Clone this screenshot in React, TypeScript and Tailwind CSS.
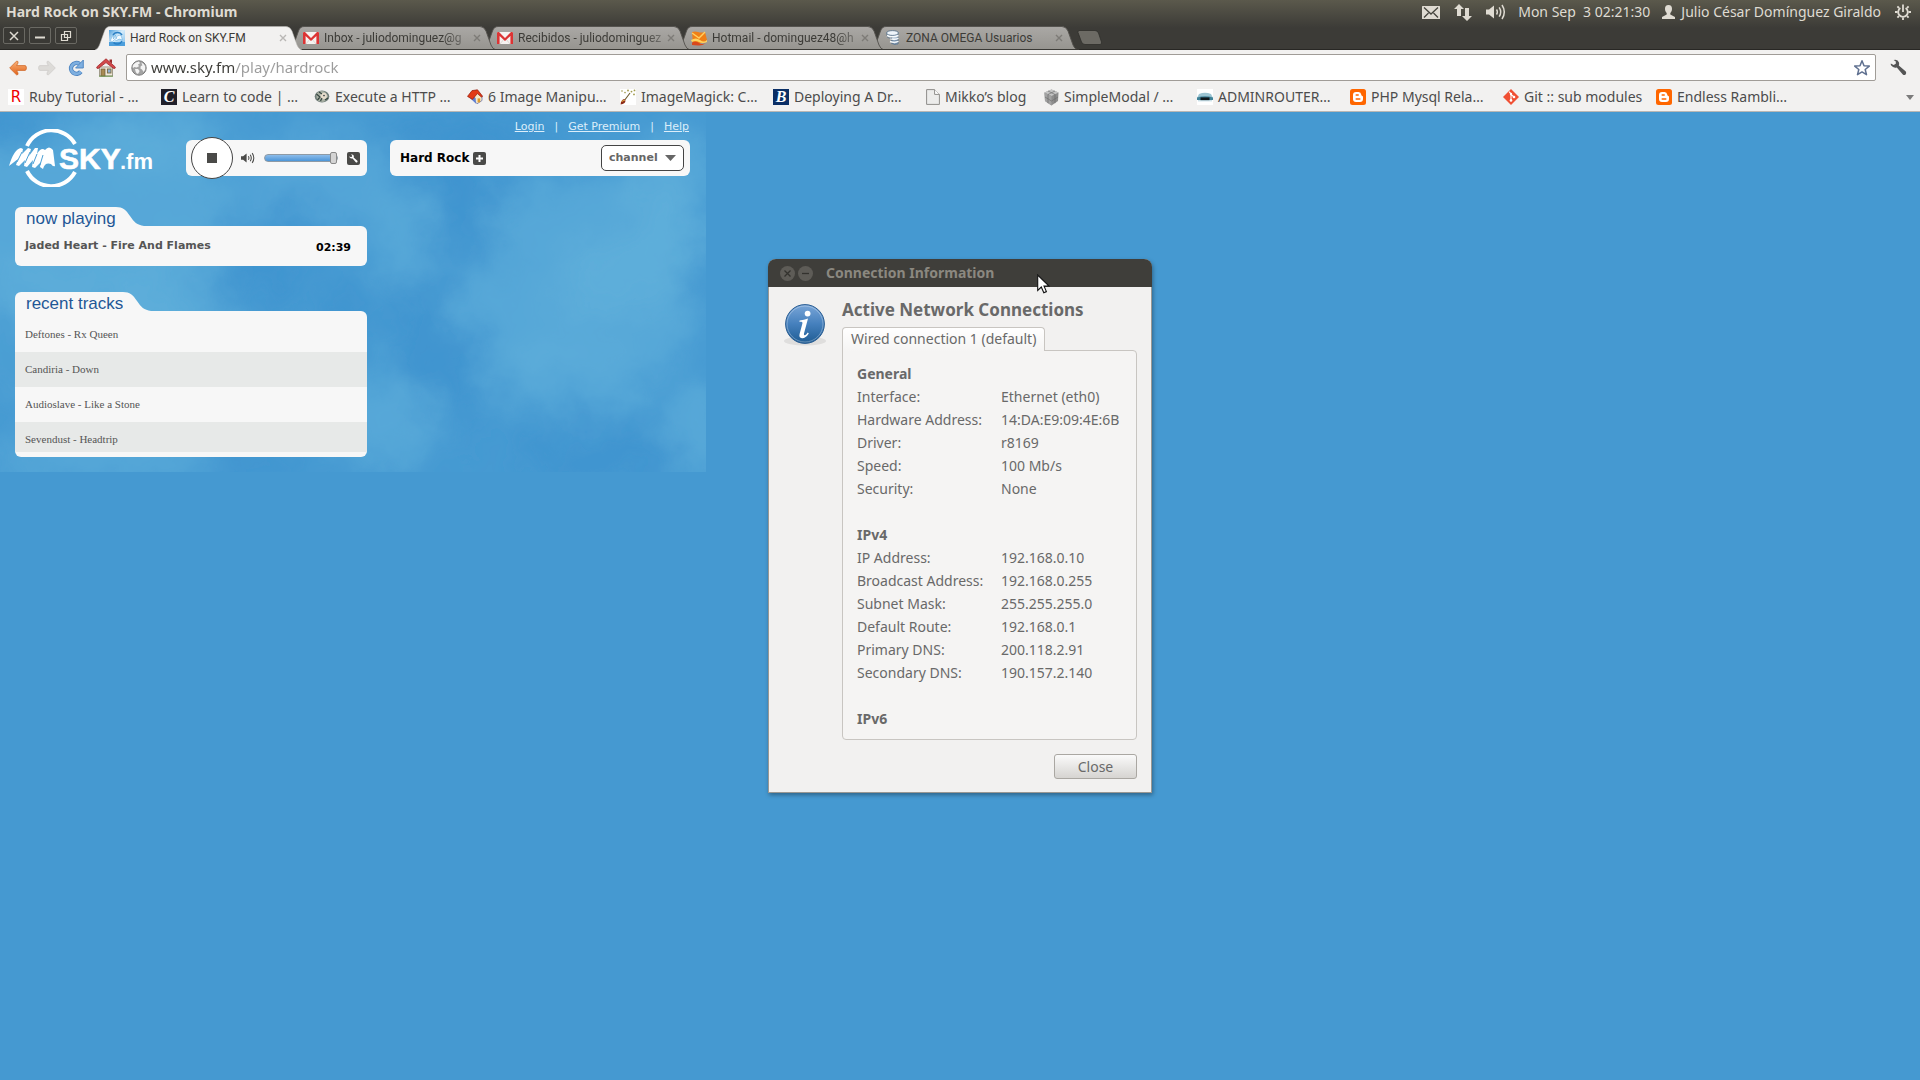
import React from 'react';

type IconProps = { className?: string };

const UI = 'font-["Noto_Sans",sans-serif]';

/* ---------- top panel icons ---------- */

const MailIcon = () => (
  <svg viewBox="0 0 18 13" className="h-[13px] w-[18px]" aria-hidden="true">
    <rect width="18" height="13" rx="0.5" fill="#dfdbd2" />
    <path d="M2 1.5 L9 8 L16 1.5 M2 11.5 L6.5 7 M16 11.5 L11.5 7" fill="none" stroke="#45443d" strokeWidth="1.3" />
  </svg>
);

const NetworkIcon = () => (
  <svg viewBox="0 0 18 17" className="h-[17px] w-[18px]" aria-hidden="true">
    <path d="M5 0 L10 5 H7 V12 H3 V5 H0 Z M13 17 L8 12 H11 V4 H15 V12 H18 Z" fill="#dfdbd2" />
  </svg>
);

const VolumeIcon = ({ className, color }: IconProps & { color: string }) => (
  <svg viewBox="0 0 20 16" className={className} aria-hidden="true">
    <path d="M0 5.5 H3 L8 1.5 V14.5 L3 10.5 H0 Z" fill={color} />
    <path d="M10.5 5.5 Q12.2 8 10.5 10.5 M13.2 3.3 Q16.2 8 13.2 12.7 M16 1 Q20.6 8 16 15" fill="none" stroke={color} strokeWidth="1.5" />
  </svg>
);

const UserIcon = () => (
  <svg viewBox="0 0 13 14" className="h-[14px] w-[13px]" aria-hidden="true">
    <path d="M6.5 0 C9 0 10 1.6 10 3.8 C10 5.8 9.2 7.2 8.3 8 V9.6 L13 12 V14 H0 V12 L4.7 9.6 V8 C3.8 7.2 3 5.8 3 3.8 C3 1.6 4 0 6.5 0 Z" fill="#dfdbd2" />
  </svg>
);

const PowerIcon = () => (
  <svg viewBox="0 0 16 16" className="size-4" aria-hidden="true">
    <g stroke="#dfdbd2" fill="none">
      <path d="M5.4 4 A4.8 4.8 0 1 0 10.6 4" strokeWidth="1.8" />
      <path d="M8 0.5 V8" strokeWidth="1.8" />
      <path d="M0 8 H2.6 M13.4 8 H16 M8 13.4 V16 M2.4 2.4 L4 4 M13.6 2.4 L12 4 M2.4 13.6 L4 12 M13.6 13.6 L12 12" strokeWidth="1.8" />
    </g>
  </svg>
);

/* ---------- tab favicons ---------- */

const SkyFavicon = () => (
  <svg viewBox="0 0 16 16" className="size-4 shrink-0" aria-hidden="true">
    <defs>
      <linearGradient id="skyfav" x1="0" y1="0" x2="1" y2="1">
        <stop offset="0" stopColor="#4d9fdc" />
        <stop offset="0.45" stopColor="#d6ecfa" />
        <stop offset="1" stopColor="#7fbdea" />
      </linearGradient>
    </defs>
    <rect width="16" height="16" fill="url(#skyfav)" />
    <rect y="12" width="16" height="4" fill="#4d9fdc" />
    <path d="M4 5 A5.2 5.2 0 0 1 13 5 M4.5 12.5 A5.2 5.2 0 0 0 13 11" fill="none" stroke="#2a7fc4" strokeWidth="1.5" />
    <path d="M1 11 L4 5 L4.5 9 L6.5 5 L7 9 Q8 4 12 5.5 L13.5 10 Q10 8 7.5 10.5 L5.5 9.5 L3.5 11.5 Z" fill="#f4fbff" stroke="#5ba6dc" strokeWidth="0.5" />
  </svg>
);

const GmailIcon = () => (
  <svg viewBox="0 0 16 12" className="h-3 w-4 shrink-0" aria-hidden="true">
    <rect width="16" height="12" rx="1" fill="#f6f3f1" />
    <path d="M3 12 L7 7 M13 12 L9 7" stroke="#d8cfcb" strokeWidth="0.8" />
    <path d="M0 1 Q0 0 1 0 H2 L8 6 L14 0 H15 Q16 0 16 1 V12 H13.4 V4 L8 9 L2.6 4 V12 H0 Z" fill="#dc3434" />
  </svg>
);

const HotmailIcon = () => (
  <svg viewBox="0 0 16 15" className="h-[15px] w-4 shrink-0" aria-hidden="true">
    <path d="M1 1 Q4 0 7 1 T14 1 L16 9 Q12 13 8 12 L2 13 Z" fill="#f07f17" />
    <path d="M1 2 L8 7 L14 1" fill="none" stroke="#ffd062" strokeWidth="1.4" />
    <path d="M0 9 Q5 6 9 9 T16 9 L16 11 Q12 13 8 11 T1 11 Z" fill="#ffd45e" />
    <path d="M1 11.5 Q5 10 8 12 T15 12 Q11 15 7 14.5 T1 14 Z" fill="#d9481c" />
  </svg>
);

const OmegaIcon = () => (
  <svg viewBox="0 0 16 16" className="size-4 shrink-0" aria-hidden="true">
    <path d="M2 3 V6 H7 V13 Q9 15.5 13 14 V4 Z" fill="#a9bdd2" stroke="#4e6780" strokeWidth="0.7" />
    <ellipse cx="7.5" cy="3" rx="6" ry="2.4" fill="#eef4fa" stroke="#4e6780" strokeWidth="0.8" />
    <path d="M2 5.5 Q7 8 13.5 5.5 M5 8.5 Q9 10 13.5 8.3 M5 11.5 Q9 13 13.5 11.3" stroke="#f7fafc" strokeWidth="1.4" fill="none" />
    <path d="M2 7 Q4 8.6 7 8.3 M6 10.5 Q9 11.6 13.5 10 M6 13.5 Q9 15 13.5 12.8" stroke="#5b7590" strokeWidth="0.7" fill="none" />
  </svg>
);

/* ---------- toolbar icons ---------- */

const BackIcon = () => (
  <svg viewBox="0 0 18 16" className="h-4 w-[18px]" aria-hidden="true">
    <defs>
      <linearGradient id="back" x1="0" y1="0" x2="0" y2="1">
        <stop offset="0" stopColor="#f9b27a" />
        <stop offset="1" stopColor="#e2641b" />
      </linearGradient>
    </defs>
    <path d="M0.7 8 L7.5 1.2 Q9.5 0.8 9 3 L7.6 5.6 H16 Q17.4 5.6 17.4 8 Q17.4 10.4 16 10.4 H7.6 L9 13 Q9.5 15.2 7.5 14.8 Z" fill="url(#back)" stroke="#cf6a2c" strokeWidth="0.8" />
  </svg>
);

const ForwardIcon = () => (
  <svg viewBox="0 0 18 16" className="h-4 w-[18px]" aria-hidden="true">
    <path d="M17.3 8 L10.5 1.2 Q8.5 0.8 9 3 L10.4 5.6 H2 Q0.6 5.6 0.6 8 Q0.6 10.4 2 10.4 H10.4 L9 13 Q8.5 15.2 10.5 14.8 Z" fill="#dddbd8" stroke="#cfcdca" strokeWidth="0.8" />
  </svg>
);

const ReloadIcon = () => (
  <svg viewBox="0 0 18 18" className="size-[18px]" aria-hidden="true">
    <path d="M12.6 5 A5.4 5.4 0 1 0 13.8 12.6" fill="none" stroke="#4b82bf" strokeWidth="4.4" />
    <path d="M12.6 5 A5.4 5.4 0 1 0 13.8 12.6" fill="none" stroke="#7eafe0" strokeWidth="2.8" />
    <path d="M16.3 1 V9 H8.6 Z" fill="#7eafe0" stroke="#4b82bf" strokeWidth="0.9" />
  </svg>
);

const HomeIcon = () => (
  <svg viewBox="0 0 20 19" className="h-[19px] w-5" aria-hidden="true">
    <path d="M3.5 9 H16.5 V18 H3.5 Z" fill="#f0e9dc" stroke="#8d8573" strokeWidth="0.8" />
    <rect x="5" y="11" width="4" height="7" fill="#a88a52" stroke="#6c5a38" strokeWidth="0.7" />
    <rect x="11.4" y="11" width="3.6" height="4" fill="#8faed0" stroke="#7a6a3e" strokeWidth="0.9" />
    <path d="M13.5 1.5 H16 V5.5 L13.5 3.5 Z" fill="#9c2b2b" />
    <path d="M10 0.8 L19.3 9 Q19.4 11 17.6 10.4 L10 4.6 L2.4 10.4 Q0.6 11 0.7 9 Z" fill="#d3484a" stroke="#9f2a2c" strokeWidth="0.8" />
    <path d="M3 18.2 H17" stroke="#6f9850" strokeWidth="1" />
  </svg>
);

const GlobeIcon = () => (
  <svg viewBox="0 0 16 16" className="size-4 shrink-0" aria-hidden="true">
    <circle cx="8" cy="8" r="7.2" fill="#a3a3a3" stroke="#7b7b7b" strokeWidth="1" />
    <path d="M2.4 4.6 Q4.4 1.9 8 1.6 L9 3.2 L7 4.6 L8 6.2 L5.6 7.6 L3.4 7 L2 8 L1.6 7 Z" fill="#f4f4f4" />
    <path d="M4 9 L7 9 L8.6 11 L7 14 Q5 13.6 4.6 11.6 Z" fill="#f4f4f4" />
    <path d="M10.4 2.6 Q13 3.6 14.2 6.2 L14.2 9.6 L12.6 12 L11 9.4 L9.4 8.4 L9.8 6 L11.4 5.4 Z" fill="#f4f4f4" />
  </svg>
);

const StarIcon = () => (
  <svg viewBox="0 0 18 18" className="size-[18px]" aria-hidden="true">
    <path d="M9 1.8 L11 6.7 L16.3 7.1 L12.2 10.5 L13.5 15.7 L9 12.9 L4.5 15.7 L5.8 10.5 L1.7 7.1 L7 6.7 Z" fill="#fff" stroke="#5f7090" strokeWidth="1.5" strokeLinejoin="round" />
  </svg>
);

const WrenchIcon = ({ className, color }: IconProps & { color: string }) => (
  <svg viewBox="0 0 17 17" className={className} aria-hidden="true">
    <path d="M3.6 1 Q7.8 0 9 3.4 Q9.4 5 8.8 6.4 L15.8 12.6 Q16.8 14 15.6 15.4 Q14.2 16.4 12.8 15.4 L6.8 8.4 Q3.4 9.4 1.2 6.6 Q0.6 5.6 0.8 4.4 L3.6 6 L5.8 4.8 L5.8 2.6 Z" fill={color} />
  </svg>
);

/* ---------- bookmark icons ---------- */

const RIcon = () => (
  <span className='flex size-4 shrink-0 items-center justify-center bg-white font-["DejaVu_Sans",sans-serif] text-[15px] leading-4 text-[#f00000]' aria-hidden="true">R</span>
);
const CIcon = () => (
  <span className='flex size-4 shrink-0 items-center justify-center bg-[#20202a] font-["Liberation_Serif",serif] text-base leading-4 font-bold text-white italic' aria-hidden="true">C</span>
);
const BIcon = () => (
  <span className='flex size-4 shrink-0 items-center justify-center bg-[#0b2f66] font-["Liberation_Serif",serif] text-base leading-4 font-bold text-white italic' aria-hidden="true">B</span>
);
const PerlIcon = () => (
  <svg viewBox="0 0 16 16" className="size-4 shrink-0" aria-hidden="true">
    <ellipse cx="8" cy="7.5" rx="7.3" ry="6" fill="#6f7c78" />
    <path d="M3 4 Q7 0.5 11 3 L14 7 Q13 12 9 13 L4 12 Q1.5 8 3 4 Z" fill="#a9b0a4" />
    <circle cx="9.6" cy="7" r="3.2" fill="#e6dccb" />
    <path d="M2.5 5 L6 8 L3.5 11 M5 3 L8 5 M11 11 L14 9 M6.5 12 L8 9" stroke="#35443f" strokeWidth="1.2" fill="none" />
    <circle cx="10" cy="6.6" r="0.8" fill="#263238" />
  </svg>
);
const HouseIcon = () => (
  <svg viewBox="0 0 16 16" className="size-4 shrink-0" aria-hidden="true">
    <path d="M4 8 L10 14.8 L15 11.5 V7 L10 3 Z" fill="#f6e8c8" stroke="#5a67a8" strokeWidth="0.7" />
    <path d="M3 9 L9 14.8 L8.6 9 L5 6 Z" fill="#5f7fd0" />
    <rect x="10.6" y="9.4" width="2.6" height="4" fill="#e09a2c" />
    <path d="M0.5 7.4 L5 1.6 L10.5 0.8 L15.6 7.2 L14.6 8.2 L10.4 4.6 L5.4 10.4 Z" fill="#e23a17" stroke="#8e1a0b" strokeWidth="0.7" />
  </svg>
);
const WandIcon = () => (
  <svg viewBox="0 0 16 16" className="size-4 shrink-0 bg-white" aria-hidden="true">
    <path d="M4 12 L10 4" stroke="#6d5a2c" strokeWidth="1.1" />
    <path d="M0.5 15.5 Q1 10.5 4.5 10 Q6.4 12 4.5 14 Q3 15 0.5 15.5 Z" fill="#8c2a17" />
    <path d="M1.5 12.5 L5 11" stroke="#e7b04a" strokeWidth="1" />
    <g fill="#a09a4a">
      <circle cx="8" cy="1.5" r="0.9" /><circle cx="11.5" cy="2.6" r="0.9" /><circle cx="14.5" cy="1.4" r="0.9" />
      <circle cx="14" cy="5.4" r="0.9" /><circle cx="5" cy="3.6" r="0.8" /><circle cx="2" cy="2" r="0.8" />
    </g>
  </svg>
);
const PageIcon = () => (
  <svg viewBox="0 0 14 16" className="h-4 w-3.5 shrink-0" aria-hidden="true">
    <path d="M0.6 0.6 H8.6 L13.4 5.4 V15.4 H0.6 Z" fill="#ececeb" stroke="#8f8d8a" strokeWidth="1" />
    <path d="M8.6 0.6 V5.4 H13.4" fill="#fff" stroke="#8f8d8a" strokeWidth="1" />
  </svg>
);
const CubeIcon = () => (
  <svg viewBox="0 0 15 17" className="h-[17px] w-[15px] shrink-0" aria-hidden="true">
    <path d="M7.5 0.5 L14.5 3.5 L14 12 L7.5 16.5 L1 12 L0.5 3.5 Z" fill="#8d8d8d" />
    <path d="M7.5 0.5 L14.5 3.5 L7.5 7 L0.5 3.5 Z" fill="#c4c4c4" />
    <path d="M7.5 7 V16.5 L1 12 L0.5 3.5 Z" fill="#a2a2a2" />
    <path d="M4 5.5 V14.2 M11 5.5 V14.2 M4 2 L11 5.5 M11 2 L4 5.5 M1 8 L7.5 12 L14 8" stroke="#6e6e6e" strokeWidth="0.7" fill="none" />
  </svg>
);
const RouterIcon = () => (
  <svg viewBox="0 0 16 16" className="size-4 shrink-0 bg-white" aria-hidden="true">
    <path d="M2 5 Q8 2.6 14 5 L16 9 Q8 6.8 0 9 Z" fill="#9cc4d2" />
    <path d="M0 8.5 Q8 6 16 8.5 V11 H0 Z" fill="#3f8298" />
    <rect x="3.5" y="8.4" width="9" height="3" fill="#10171b" />
    <path d="M1 11.8 H15" stroke="#b5d4df" strokeWidth="1" />
  </svg>
);
const BloggerIcon = () => (
  <svg viewBox="0 0 16 16" className="size-4 shrink-0" aria-hidden="true">
    <rect width="16" height="16" rx="2.5" fill="#ff6600" />
    <path d="M6 3 H8.6 Q11 3 11.2 5.6 Q11.4 6.9 12.3 7 Q13 7.1 13 8 V10 Q13 13 10 13 H6 Q3 13 3 10 V6 Q3 3 6 3 Z" fill="#fff" />
    <path d="M6.2 6 H8.2 M6.2 10 H9.8" stroke="#ff6600" strokeWidth="1.5" strokeLinecap="round" />
  </svg>
);
const GitIcon = () => (
  <svg viewBox="0 0 16 16" className="size-4 shrink-0" aria-hidden="true">
    <path d="M8 0 L16 8 L8 16 L0 8 Z" fill="#f04f33" />
    <path d="M6 2.6 L8 4.8 V11.4 M8 5.4 L11 8" fill="none" stroke="#fff" strokeWidth="1.1" />
    <circle cx="8" cy="11.4" r="1.3" fill="#fff" /><circle cx="11" cy="8" r="1.3" fill="#fff" /><circle cx="8" cy="5" r="1.2" fill="#fff" />
  </svg>
);

/* ---------- browser chrome ---------- */

type TabInfo = { title: string; icon: React.ReactNode; active?: boolean; fade?: boolean; layer: string };

const tabs: TabInfo[] = [
  { title: 'Hard Rock on SKY.FM', icon: <SkyFavicon />, active: true, layer: 'z-50' },
  { title: 'Inbox - juliodominguez@g', icon: <GmailIcon />, fade: true, layer: 'z-40' },
  { title: 'Recibidos - juliodominguez', icon: <GmailIcon />, fade: true, layer: 'z-30' },
  { title: 'Hotmail - dominguez48@h', icon: <HotmailIcon />, fade: true, layer: 'z-20' },
  { title: 'ZONA OMEGA Usuarios', icon: <OmegaIcon />, layer: 'z-10' },
];

const TabShape = ({ active }: { active?: boolean }) => (
  <svg viewBox="0 0 208 24" preserveAspectRatio="none" className="absolute inset-0 h-full w-full" aria-hidden="true">
    <defs>
      <linearGradient id="tabIdle" x1="0" y1="0" x2="0" y2="1">
        <stop offset="0" stopColor="#aaa8a5" />
        <stop offset="1" stopColor="#96948f" />
      </linearGradient>
    </defs>
    <path
      d="M0 24 Q3 23 4.5 19 L9.5 5 Q11 0.5 15 0.5 H191 Q195 0.5 197 5 L202 19 Q203.5 23 207 24 Z"
      fill={active ? '#f2f1f0' : 'url(#tabIdle)'}
    />
    <path
      d="M0 24 Q3 23 4.5 19 L9.5 5 Q11 0.5 15 0.5 H191 Q195 0.5 197 5 L202 19 Q203.5 23 207 24"
      fill="none"
      stroke={active ? '#b9b7b3' : '#53514c'}
      strokeWidth="1"
      strokeOpacity={active ? 0.5 : 0.9}
    />
    {!active && <path d="M0 23.5 H208" stroke="#3a3935" />}
  </svg>
);

const Tab = ({ title, icon, active, fade, layer }: TabInfo) => (
  <div className={`relative -mr-3.5 flex h-6 w-52 items-center pr-3 pl-3.5 ${layer}`}>
    <TabShape active={active} />
    <button type="button" className="relative flex min-w-0 flex-1 items-center gap-[5px] text-left">
      {icon}
      <span className={`font-["Roboto",sans-serif] text-xs leading-5 whitespace-nowrap text-[#3c3b37] ${fade ? 'mask-r-from-88% mask-r-to-110%' : ''}`}>{title}</span>
    </button>
    <button type="button" aria-label={`Close ${title}`} className="relative p-1">
      <svg viewBox="0 0 8 8" className="size-2" aria-hidden="true">
        <path d="M1 1 L7 7 M7 1 L1 7" stroke={active ? '#b9b7b5' : '#7d7b77'} strokeWidth="1.4" />
      </svg>
    </button>
  </div>
);

const WindowButton = ({ label, children }: { label: string; children: React.ReactNode }) => (
  <button type="button" aria-label={label} className="flex h-[17px] w-[22px] items-center justify-center rounded-xs border border-[#6a6963] bg-[#3a3935]">
    <svg viewBox="0 0 12 12" className="size-3" fill="none" stroke="#dfdbd2" aria-hidden="true">{children}</svg>
  </button>
);

const bookmarks: { label: string; icon: React.ReactNode; width: string }[] = [
  { label: 'Ruby Tutorial - …', icon: <RIcon />, width: 'w-[153px]' },
  { label: 'Learn to code | …', icon: <CIcon />, width: 'w-[153px]' },
  { label: 'Execute a HTTP …', icon: <PerlIcon />, width: 'w-[153px]' },
  { label: '6 Image Manipu…', icon: <HouseIcon />, width: 'w-[153px]' },
  { label: 'ImageMagick: C…', icon: <WandIcon />, width: 'w-[153px]' },
  { label: 'Deploying A Dr…', icon: <BIcon />, width: 'w-[153px]' },
  { label: 'Mikko’s blog', icon: <PageIcon />, width: 'w-[118px]' },
  { label: 'SimpleModal / …', icon: <CubeIcon />, width: 'w-[153px]' },
  { label: 'ADMINROUTER…', icon: <RouterIcon />, width: 'w-[153px]' },
  { label: 'PHP Mysql Rela…', icon: <BloggerIcon />, width: 'w-[153px]' },
  { label: 'Git :: sub modules', icon: <GitIcon />, width: 'w-[153px]' },
  { label: 'Endless Rambli…', icon: <BloggerIcon />, width: 'w-[153px]' },
];

const TopPanel = () => (
  <div className="flex h-6 items-center justify-between pr-[9px] pl-1.5 text-[#dfdbd2]">
    <h1 className="text-sm leading-6 font-bold">Hard Rock on SKY.FM - Chromium</h1>
    <div className="flex items-center text-sm leading-6">
      <button type="button" aria-label="Messages" className="mr-3.5"><MailIcon /></button>
      <button type="button" aria-label="Network" className="mr-3.5"><NetworkIcon /></button>
      <button type="button" aria-label="Sound" className="mr-3"><VolumeIcon className="h-4 w-5" color="#dfdbd2" /></button>
      <button type="button" className="mr-3 whitespace-pre">Mon Sep  3 02:21:30</button>
      <button type="button" className="mr-3.5 flex items-center gap-1.5"><UserIcon />Julio César Domínguez Giraldo</button>
      <button type="button" aria-label="Session"><PowerIcon /></button>
    </div>
  </div>
);

const TabStrip = () => (
  <div className="flex h-[26px] items-end border-b border-[#282724]">
    <div className="flex gap-1 self-start pt-[3px] pl-[3px]">
      <WindowButton label="Close window"><path d="M2 2 L10 10 M10 2 L2 10" strokeWidth="1.5" /></WindowButton>
      <WindowButton label="Minimize window"><path d="M1 7.5 H11" strokeWidth="2" /></WindowButton>
      <WindowButton label="Restore window"><path d="M4.5 1.5 H10.5 V7.5 H4.5 Z M1.5 4.5 H7.5 V10.5 H1.5 Z" strokeWidth="1.2" /></WindowButton>
    </div>
    <div className="-mb-px ml-[18px] flex">
      {tabs.map((t) => <Tab key={t.title} {...t} />)}
    </div>
    <button type="button" aria-label="New tab" className="mb-1 ml-3">
      <svg viewBox="0 0 26 15" className="h-[15px] w-[26px]" aria-hidden="true">
        <path d="M2 0.5 H18 Q20.5 0.5 21.5 3 L24.5 12 Q25 14.5 23 14.5 H8 Q5.5 14.5 4.5 12 L1 2.5 Q0.6 0.5 2 0.5 Z" fill="#6c6a64" stroke="#2f2e2b" strokeWidth="0.8" />
      </svg>
    </button>
  </div>
);

const Toolbar = () => (
  <div className="flex items-center px-[9px] pt-1">
    <div className="flex items-center gap-[11px]">
      <button type="button" aria-label="Back"><BackIcon /></button>
      <button type="button" aria-label="Forward" disabled><ForwardIcon /></button>
      <button type="button" aria-label="Reload"><ReloadIcon /></button>
      <button type="button" aria-label="Home"><HomeIcon /></button>
    </div>
    <div className="ml-2.5 flex h-[27px] flex-1 items-center gap-1 rounded-xs border border-[#a09c97] bg-white px-1">
      <GlobeIcon />
      <input
        type="text"
        aria-label="Address"
        defaultValue="www.sky.fm/play/hardrock"
        className="min-w-0 flex-1 bg-linear-to-r from-[#3c3b37] from-[84px] to-[#9b9b9b] to-[84px] bg-clip-text pb-0.5 text-[15px] leading-6 text-transparent outline-none"
      />
      <button type="button" aria-label="Bookmark this page"><StarIcon /></button>
    </div>
    <button type="button" aria-label="Settings" className="mr-1 ml-3.5"><WrenchIcon className="size-[17px]" color="#555" /></button>
  </div>
);

const BookmarkBar = () => (
  <nav aria-label="Bookmarks" className="flex h-[31px] items-center border-b border-[#b9b7b4] pt-0.5 pr-1.5 pl-2">
    {bookmarks.map((b) => (
      <a key={b.label} href="#" className={`flex shrink-0 items-center gap-[5px] text-sm leading-5 whitespace-nowrap text-[#4c4c4c] ${b.width}`}>
        {b.icon}
        <span>{b.label}</span>
      </a>
    ))}
    <button type="button" aria-label="More bookmarks" className="ml-auto">
      <svg viewBox="0 0 8 5" className="h-[5px] w-2" aria-hidden="true"><path d="M0 0 H8 L4 5 Z" fill="#7b7b7b" /></svg>
    </button>
  </nav>
);

/* ---------- SKY.FM player ---------- */

const CloudBackdrop = () => (
  <svg viewBox="0 0 706 360" preserveAspectRatio="none" className="absolute inset-0 h-full w-full" aria-hidden="true">
    <defs>
      <filter id="cloud" x="-10%" y="-10%" width="120%" height="120%">
        <feGaussianBlur stdDeviation="17" result="soft" />
        <feTurbulence type="fractalNoise" baseFrequency="0.022" numOctaves="5" seed="7" result="noise" />
        <feDisplacementMap in="soft" in2="noise" scale="48" xChannelSelector="R" yChannelSelector="G" />
      </filter>
    </defs>
    <rect width="706" height="360" fill="#469ad2" />
    <g filter="url(#cloud)">
      <g fill="#66b5de" fillOpacity="0.5">
        <ellipse cx="70" cy="100" rx="170" ry="90" />
        <ellipse cx="50" cy="220" rx="120" ry="70" />
        <ellipse cx="160" cy="20" rx="60" ry="36" />
        <ellipse cx="180" cy="180" rx="60" ry="40" />
        <ellipse cx="180" cy="260" rx="80" ry="60" />
        <ellipse cx="400" cy="125" rx="34" ry="48" />
        <ellipse cx="320" cy="70" rx="80" ry="50" fillOpacity="0.4" />
        <ellipse cx="600" cy="130" rx="110" ry="75" />
        <ellipse cx="670" cy="80" rx="44" ry="60" />
        <ellipse cx="630" cy="190" rx="80" ry="70" />
        <ellipse cx="510" cy="210" rx="74" ry="34" transform="rotate(38 510 210)" />
        <ellipse cx="570" cy="265" rx="80" ry="34" />
        <ellipse cx="385" cy="310" rx="56" ry="50" />
        <ellipse cx="700" cy="320" rx="40" ry="56" />
        <ellipse cx="100" cy="350" rx="110" ry="26" />
      </g>
      <g fill="#3b8fcd" fillOpacity="0.55">
        <ellipse cx="290" cy="120" rx="60" ry="30" />
        <ellipse cx="250" cy="170" rx="50" ry="22" />
        <ellipse cx="470" cy="30" rx="80" ry="30" />
        <ellipse cx="465" cy="100" rx="34" ry="50" />
        <ellipse cx="425" cy="210" rx="30" ry="50" />
        <ellipse cx="450" cy="275" rx="30" ry="40" />
        <ellipse cx="345" cy="200" rx="24" ry="30" />
        <ellipse cx="600" cy="345" rx="80" ry="26" />
        <ellipse cx="698" cy="170" rx="16" ry="36" />
        <ellipse cx="10" cy="10" rx="60" ry="24" />
        <ellipse cx="5" cy="240" rx="20" ry="50" />
        <ellipse cx="250" cy="350" rx="50" ry="16" />
      </g>
    </g>
  </svg>
);

const SkyLogo = () => (
  <svg viewBox="0 0 145 58" className="h-[58px] w-[145px]" role="img" aria-label="SKY.fm">
    <g fill="none" stroke="#fff">
      <path d="M18 17 A27 27 0 0 1 66 15" strokeWidth="4" />
      <path d="M18 42 A27 27 0 0 0 66 43" strokeWidth="4" />
    </g>
    <path d="M0 37 Q5 20 12 19 L14 20 L13 25 L19 19 L22 20 L20 27 L26 19 H29 L28 25 Q32 18 36 21 Q40 16 44 21 L46 37 Q44 38 42 35 Q36 33 34 40 L31 38 L32 33 L26 39 L23 38 L24 31 L18 38 L15 37 L16 31 L10 37 L7 36 L9 30 Z" fill="#fff" />
    <path d="M8 33 L13 23 M16 34 L21 23 M24 35 L28 25 M31 36 L34 26" stroke="#4a9fd5" strokeWidth="1" />
    <text x="50" y="40" fill="#fff" stroke="#fff" strokeWidth="0.6" fontFamily="Liberation Sans, Arial, sans-serif" fontWeight="bold" fontSize="30">SKY</text>
    <text x="111" y="40" fill="#fff" fontFamily="Liberation Sans, Arial, sans-serif" fontWeight="bold" fontSize="22">.fm</text>
  </svg>
);

const CardTab = ({ children }: { children: React.ReactNode }) => (
  <div className="flex h-[19px]">
    <h2 className='rounded-tl-md bg-[#f7f7f7] pl-[11px] font-["Liberation_Sans",Arial,sans-serif] text-[17px] leading-[23px] text-[#1f5796]'>{children}</h2>
    <svg viewBox="0 0 28 19" className="h-[19px] w-7" aria-hidden="true">
      <path d="M0 0 C7 0 10 3 14 9 C18 15 21 18 28 19 V20 H0 Z" fill="#f7f7f7" />
    </svg>
  </div>
);

const tracks = ['Deftones - Rx Queen', 'Candiria - Down', 'Audioslave - Like a Stone', 'Sevendust - Headtrip'];

const SkyPlayer = () => (
  <section className='relative h-[360px] w-[706px] overflow-hidden font-["DejaVu_Sans",Verdana,sans-serif]'>
    <CloudBackdrop />
    <div className="relative">
      <nav aria-label="Account" className="flex h-7 items-center justify-end gap-2.5 pt-0.5 pr-[17px] text-[11px] text-[#dceefa]">
        <a href="#" className="underline">Login</a>
        <span>|</span>
        <a href="#" className="underline">Get Premium</a>
        <span>|</span>
        <a href="#" className="underline">Help</a>
      </nav>

      <div className="flex h-9 items-center pl-[9px]">
        <div className="w-[177px]"><SkyLogo /></div>
        <div className="flex h-9 w-[181px] items-center rounded-md bg-[#f7f7f7] pl-[5px]">
          <button type="button" aria-label="Stop" className="flex size-[42px] shrink-0 items-center justify-center rounded-full border border-[#444] bg-white">
            <span className="size-2.5 bg-[#4a4a48]" />
          </button>
          <VolumeIcon className="ml-2 h-3 w-3.5" color="#4a4a48" />
          <input
            type="range"
            aria-label="Volume"
            min={0}
            max={100}
            defaultValue={100}
            className="ml-[9px] h-3 w-[74px] appearance-none bg-transparent [&::-webkit-slider-runnable-track]:h-2 [&::-webkit-slider-runnable-track]:rounded-sm [&::-webkit-slider-runnable-track]:border [&::-webkit-slider-runnable-track]:border-[#8e9aa5] [&::-webkit-slider-runnable-track]:bg-linear-to-b [&::-webkit-slider-runnable-track]:from-[#8cbcea] [&::-webkit-slider-runnable-track]:to-[#4c96d8] [&::-webkit-slider-thumb]:-mt-[3px] [&::-webkit-slider-thumb]:h-3 [&::-webkit-slider-thumb]:w-[7px] [&::-webkit-slider-thumb]:appearance-none [&::-webkit-slider-thumb]:rounded-xs [&::-webkit-slider-thumb]:border [&::-webkit-slider-thumb]:border-[#8a8a8a] [&::-webkit-slider-thumb]:bg-[#d4d4d4]"
          />
          <button type="button" aria-label="Player settings" className="ml-[9px] flex size-[13px] items-center justify-center rounded-xs bg-[#4a4a48]">
            <WrenchIcon className="size-[9px]" color="#fff" />
          </button>
        </div>

        <div className="ml-[23px] flex h-9 w-[300px] items-center rounded-md bg-[#f7f7f7] pr-1.5 pl-2.5">
          <h2 className="text-xs font-bold text-black">Hard Rock</h2>
          <button type="button" aria-label="Add to favorites" className="ml-1 flex size-[13px] items-center justify-center rounded-xs bg-[#4a4a48]">
            <svg viewBox="0 0 7 7" className="size-[7px]" aria-hidden="true"><path d="M3.5 0 V7 M0 3.5 H7" stroke="#fff" strokeWidth="2" /></svg>
          </button>
          <div className="relative ml-auto">
            <select aria-label="Channel" className="block h-[26px] w-[83px] appearance-none rounded-[5px] border border-[#444] bg-white pl-[7px] text-[11px] font-bold text-[#666]">
              <option>channel</option>
            </select>
            <svg viewBox="0 0 11 6" className="pointer-events-none absolute top-2.5 right-2 h-1.5 w-[11px]" aria-hidden="true"><path d="M0 0 H11 L5.5 6 Z" fill="#666" /></svg>
          </div>
        </div>
      </div>

      <div className="mt-[31px] ml-[15px] w-[352px]">
        <CardTab>now playing</CardTab>
        <div className="flex h-10 items-center justify-between rounded-md rounded-tl-none bg-[#f7f7f7] pr-4 pl-2.5 text-[11px] font-bold">
          <span className="text-[#555]">Jaded Heart - Fire And Flames</span>
          <time className="pt-1 text-black">02:39</time>
        </div>
      </div>

      <div className="mt-[26px] ml-[15px] w-[352px]">
        <CardTab>recent tracks</CardTab>
        <ul className='overflow-hidden rounded-md rounded-tl-none bg-[#f7f7f7] pt-1.5 pb-[5px] font-["Liberation_Serif",serif] text-[11px] text-[#555]'>
          {tracks.map((t) => (
            <li key={t} className="h-[35px] pl-2.5 leading-[35px] last:h-[30px] even:bg-[#e7e9e8]">{t}</li>
          ))}
        </ul>
      </div>
    </div>
  </section>
);

/* ---------- connection dialog ---------- */

const groups: { title: string; rows: [string, string][] }[] = [
  {
    title: 'General',
    rows: [
      ['Interface:', 'Ethernet (eth0)'],
      ['Hardware Address:', '14:DA:E9:09:4E:6B'],
      ['Driver:', 'r8169'],
      ['Speed:', '100 Mb/s'],
      ['Security:', 'None'],
    ],
  },
  {
    title: 'IPv4',
    rows: [
      ['IP Address:', '192.168.0.10'],
      ['Broadcast Address:', '192.168.0.255'],
      ['Subnet Mask:', '255.255.255.0'],
      ['Default Route:', '192.168.0.1'],
      ['Primary DNS:', '200.118.2.91'],
      ['Secondary DNS:', '190.157.2.140'],
    ],
  },
  { title: 'IPv6', rows: [] },
];

const InfoIcon = () => (
  <svg viewBox="0 0 44 44" className="size-11" aria-hidden="true">
    <defs>
      <linearGradient id="info" x1="0" y1="0" x2="0" y2="1">
        <stop offset="0" stopColor="#7aa6d8" />
        <stop offset="0.5" stopColor="#4580bd" />
        <stop offset="1" stopColor="#1f5c93" />
      </linearGradient>
    </defs>
    <ellipse cx="22" cy="38" rx="21" ry="4.5" fill="#000" fillOpacity="0.08" />
    <circle cx="22" cy="21" r="19.4" fill="url(#info)" stroke="#2a5d92" strokeWidth="1" />
    <circle cx="22" cy="21" r="18" fill="none" stroke="#fff" strokeOpacity="0.3" />
    <circle cx="24.6" cy="10.6" r="2.9" fill="#fff" />
    <path d="M16.6 17.6 Q21 16.6 25 15.4 L21 30.6 Q20.6 32.6 22 32.2 Q23.4 31.6 24.8 29.6 L25.8 30.4 Q22.6 35.4 19 35.2 Q15.6 35 16.6 31 L19.4 20.6 Q19.8 18.8 18.4 18.8 L16.4 18.8 Z" fill="#fff" />
  </svg>
);

const DialogButton = ({ label, d }: { label: string; d: string }) => (
  <button type="button" aria-label={label} className="flex size-[15px] items-center justify-center rounded-full bg-[#5e5c57]">
    <svg viewBox="0 0 9 9" className="size-[9px]" aria-hidden="true"><path d={d} stroke="#33322e" strokeWidth="1.3" /></svg>
  </button>
);

const ConnectionDialog = () => (
  <section
    role="dialog"
    aria-labelledby="connection-title"
    className="absolute top-[259px] left-1/2 w-96 -translate-x-1/2 rounded-t-lg border border-t-0 border-[#9a9893] bg-[#f2f1f0] text-sm text-[#696969] shadow-[1px_2px_4px_rgba(0,0,0,0.35)]"
  >
    <header className="-mx-px flex h-7 items-center rounded-t-lg bg-[#3f3e3a] pl-3 text-[#8b8880]">
      <DialogButton label="Close dialog" d="M1.5 1.5 L7.5 7.5 M7.5 1.5 L1.5 7.5" />
      <span className="w-[3px]" />
      <DialogButton label="Minimize dialog" d="M1 4.5 H8" />
      <h2 id="connection-title" className="ml-[13px] leading-7 font-bold">Connection Information</h2>
    </header>
    <div className="flex pr-3.5 pl-3.5">
      <div className="mr-[15px] shrink-0 pt-4"><InfoIcon /></div>
      <div className="min-w-0 flex-1 pt-2.5">
        <h3 className="text-[17px] leading-[26px] font-bold">Active Network Connections</h3>
        <div role="tablist" className="mt-1 flex">
          <button type="button" role="tab" aria-selected="true" className="relative z-10 -mb-px h-6 rounded-t-sm border border-b-0 border-[#c8c5c1] bg-linear-to-b from-white to-[#f5f4f3] px-2 pb-0.5 leading-[21px]">
            Wired connection 1 (default)
          </button>
        </div>
        <div role="tabpanel" className="rounded-sm rounded-tl-none border border-[#c8c5c1] bg-[#f5f4f3] pt-[11px] pr-3 pb-[9px] pl-3.5">
          {groups.map((g) => (
            <table key={g.title} className="mb-[23px] w-full leading-[23px] last:mb-0">
              <thead>
                <tr><th scope="colgroup" colSpan={2} className="p-0 text-left font-bold">{g.title}</th></tr>
              </thead>
              <tbody>
                {g.rows.map(([k, v]) => (
                  <tr key={k}>
                    <th scope="row" className="w-36 p-0 text-left font-normal whitespace-nowrap">{k}</th>
                    <td className="p-0 whitespace-nowrap">{v}</td>
                  </tr>
                ))}
              </tbody>
            </table>
          ))}
        </div>
      </div>
    </div>
    <footer className="flex justify-end px-3.5 pt-3.5 pb-[13px]">
      <button type="button" className="h-[25px] w-[83px] rounded-[3px] border border-[#aaa7a2] bg-linear-to-b from-[#fafafa] to-[#d6d4d1] leading-[23px]">Close</button>
    </footer>
    <svg viewBox="0 0 13 20" className="pointer-events-none absolute top-[15px] left-[268px] h-5 w-[13px]" aria-hidden="true">
      <path d="M0.7 1 V16.4 L4.3 13 L6.8 18.8 L9.4 17.6 L7 12 H12 Z" fill="#fff" stroke="#111" strokeWidth="1.1" />
    </svg>
  </section>
);

export default function App() {
  return (
    <div className={`relative min-h-screen overflow-hidden bg-[#4599d1] ${UI}`}>
      <header className="bg-[#f2f1f0]">
        <div className="bg-[#3c3b37] bg-linear-to-b from-[#5b594c] to-[#3c3b37] to-[28px]">
          <TopPanel />
          <TabStrip />
        </div>
        <Toolbar />
        <BookmarkBar />
      </header>
      <main>
        <SkyPlayer />
      </main>
      <ConnectionDialog />
    </div>
  );
}
